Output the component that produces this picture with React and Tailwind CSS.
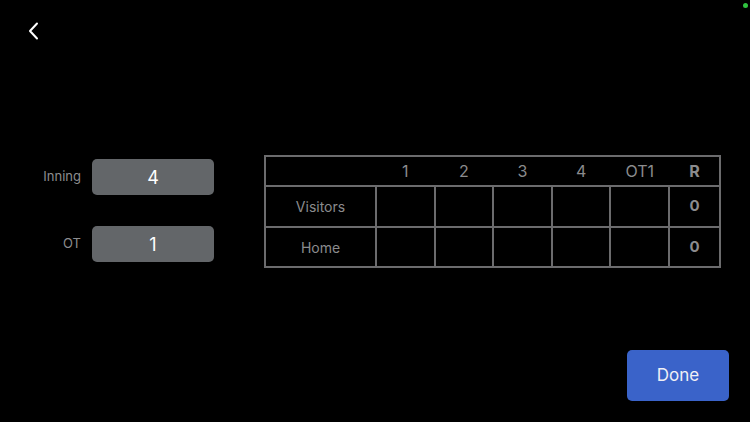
import React from 'react';

const innings = ['1', '2', '3', '4', 'OT1'];
const teams = [
  { name: 'Visitors', runs: 0, h: 'h-[41px]' },
  { name: 'Home', runs: 0, h: 'h-[38px]' },
];

function ValueBox({ label, value }) {
  return (
    <div className="flex items-center">
      <span className="w-[81px] text-right text-[13px] text-[#8d8d8f]">{label}</span>
      <div className="ml-[11px] w-[122px] h-[36px] rounded-[5px] bg-[#636669] flex items-center justify-center text-[18px] text-white">
        {value}
      </div>
    </div>
  );
}

function Scoreboard() {
  return (
    <div className="w-[457px] border-2 border-[#6b6b6d]">
      <div className="flex h-[30px] border-b-2 border-[#6b6b6d] text-[16px] text-[#8b8b8d]">
        <div className="w-[109px]" />
        {innings.map(i => (
          <div key={i} className="w-[58.6px] pl-[2px] flex items-center justify-center">{i}</div>
        ))}
        <div className="flex-1 pl-[2px] flex items-center justify-center font-bold">R</div>
      </div>
      {teams.map((t, idx) => (
        <div key={t.name} className={`flex ${t.h} ${idx === 0 ? 'border-b-2 border-[#6b6b6d]' : ''}`}>
          <div className="w-[109px] flex items-center justify-center text-[14px] text-[#8b8b8d]">{t.name}</div>
          {innings.map(i => (
            <div key={i} className="w-[58.6px] border-l-2 border-[#6b6b6d]" />
          ))}
          <div className="flex-1 border-l-2 border-[#6b6b6d] flex items-center justify-center font-bold text-[15px] text-[#8b8b8d]">{t.runs}</div>
        </div>
      ))}
    </div>
  );
}

export default function App() {
  return (
    <div className="relative w-[750px] h-[422px] bg-black flex flex-col" style={{ fontFamily: 'Inter, "Liberation Sans", sans-serif' }}>
      <div className="absolute top-[3px] right-[2px] w-[5px] h-[5px] rounded-full bg-[#2fc23f]" />
      <div className="h-[60px] pt-[22px] pl-[27px]">
        <button className="w-[14px] h-[18px]">
          <svg width="14" height="18" viewBox="0 0 14 18" fill="none">
            <path d="M10 1.5 L3 9 L10 16.5" stroke="white" strokeWidth="2" strokeLinecap="round" strokeLinejoin="round" />
          </svg>
        </button>
      </div>
      <div className="mt-[95px] flex">
        <div className="pt-[4px] flex flex-col gap-[31px]">
          <ValueBox label="Inning" value="4" />
          <ValueBox label="OT" value="1" />
        </div>
        <div className="ml-[50px]">
          <Scoreboard />
        </div>
      </div>
      <div className="flex-1" />
      <div className="flex justify-end pr-[21px] pb-[21px]">
        <button className="w-[102px] h-[51px] rounded-[5px] bg-[#3a63c9] text-[17px] text-[#f0f0f5]">Done</button>
      </div>
    </div>
  );
}
